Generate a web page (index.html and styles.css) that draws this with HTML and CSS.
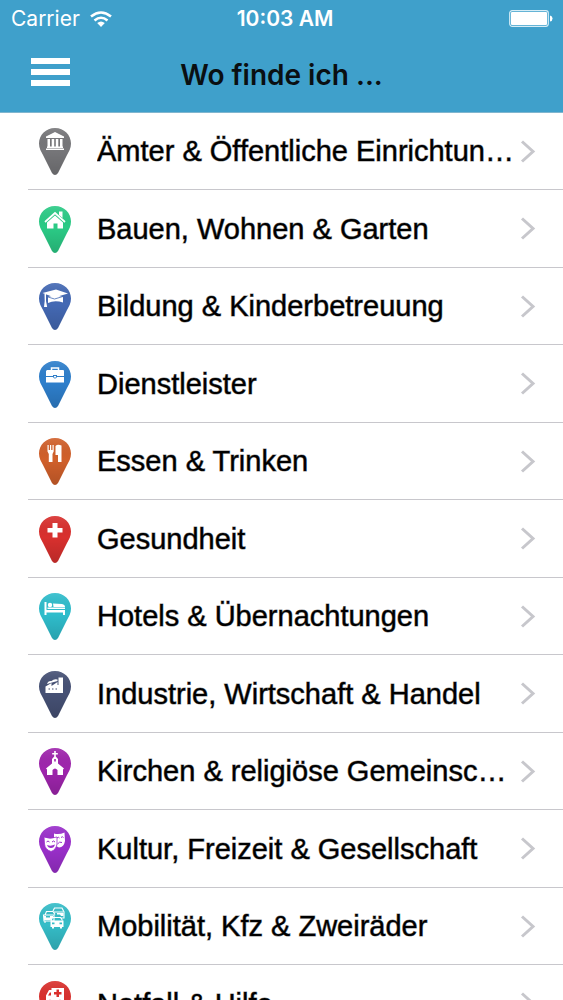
FILE: index.html
```html
<!DOCTYPE html>
<html lang="de">
<head>
<meta charset="utf-8">
<meta name="viewport" content="width=device-width, initial-scale=1">
<title>Wo finde ich ...</title>
<link rel="stylesheet" href="styles.css">
</head>
<body>
<svg class="defs" aria-hidden="true">
  <defs>
    <linearGradient id="shade" x1="0" y1="0" x2="0" y2="1">
      <stop offset="0" stop-color="#fff" stop-opacity=".1"/>
      <stop offset=".45" stop-color="#000" stop-opacity="0"/>
      <stop offset="1" stop-color="#000" stop-opacity=".15"/>
    </linearGradient>
    <path id="drop" d="M16 0C7 0 0 7 0 15.500C0 20 2 23.500 4 27L13 45Q16 49 19 45L28 27C30 23.500 32 20 32 15.500C32 7 25 0 16 0Z"/>
    <g id="pin"><use href="#drop"/><use href="#drop" fill="url(#shade)"/></g>
    <path id="chevron" d="M2 1.500L13 11.500L2 21.500" fill="none" stroke="#c7c7cc" stroke-width="3"/>
  </defs>
</svg>
<header class="header">
  <div class="status">
    <div class="carrier">
      <span>Carrier</span>
      <svg width="22" height="16" viewBox="0 0 22 16" fill="none" stroke="#fff" stroke-width="2.600" aria-hidden="true">
        <path d="M1 5.500Q11-2.500 21 5.500"/><path d="M4.500 9.500Q11 4 17.500 9.500"/><path d="M7.200 12Q11 8.800 14.800 12L11 16Z" fill="#fff" stroke="none"/>
      </svg>
    </div>
    <time class="time">10:03 AM</time>
    <svg class="battery" width="44" height="17" viewBox="0 0 44 17" aria-hidden="true">
      <rect x=".7" y=".7" width="38.600" height="15.600" rx="2.500" fill="none" stroke="#d5edf7" stroke-width="1.200"/>
      <rect x="2" y="2" width="36" height="13" rx="1" fill="#fff"/>
      <path d="M41 5.500Q43.500 6 43.500 8.500T41 11.500Z" fill="#fff"/>
    </svg>
  </div>
  <div class="navbar">
    <button class="menu" type="button" aria-label="Menü"><span></span><span></span><span></span></button>
    <h1 class="title">Wo finde ich ...</h1>
  </div>
</header>
<main>
<ul class="list">
  <li class="row"><a class="link" href="#aemter">
    <svg class="pin" viewBox="0 0 32 48" fill="#77777a"><use href="#pin"/><g fill="#fff"><path d="M16 4L25 8.500V10H7V8.500Z"/><path d="M8.500 11h2.500v8H8.500zM12.700 11h2.500v8h-2.500zM16.800 11h2.500v8h-2.500zM21 11h2.500v8H21zM8 18.500h16V20H8zM7 20.500h18V22H7z"/></g></svg>
    <span class="label">Ämter &amp; Öffentliche Einrichtungen</span>
    <svg class="arrow" viewBox="0 0 16 23"><use href="#chevron"/></svg></a></li>
  <li class="row"><a class="link" href="#bauen">
    <svg class="pin" viewBox="0 0 32 48" fill="#2bcb86"><use href="#pin"/><path fill="none" stroke="#fff" stroke-width="1.700" d="M6 16L16 7L26 16"/><path fill="#fff" d="M20 5.500h3.500V12L20 9zM16 9.500L24 16.500V22.500H18.500v-5h-4v5H8v-6Z"/></svg>
    <span class="label">Bauen, Wohnen &amp; Garten</span>
    <svg class="arrow" viewBox="0 0 16 23"><use href="#chevron"/></svg></a></li>
  <li class="row"><a class="link" href="#bildung">
    <svg class="pin" viewBox="0 0 32 48" fill="#4469b4"><use href="#pin"/><g fill="#fff"><path d="M3.500 10L17 6.500L29 10.500L15.500 14.500Z"/><path d="M9 14Q15.500 11.500 24 14V19.500Q15.500 17 9 20Z"/><path d="M9 14L15.500 16L24 13.500" fill="none" stroke="#4469b4" stroke-width=".8"/><path d="M5.500 11h1.500v7l1.200 6H5l.7-6Z"/></g></svg>
    <span class="label">Bildung &amp; Kinderbetreuung</span>
    <svg class="arrow" viewBox="0 0 16 23"><use href="#chevron"/></svg></a></li>
  <li class="row"><a class="link" href="#dienstleister">
    <svg class="pin" viewBox="0 0 32 48" fill="#2e7fcc"><use href="#pin"/><path fill="none" stroke="#fff" stroke-width="1.500" d="M12.500 10V7h7v3"/><path fill="#fff" d="M8 9h16.500l.5 1v5H18v-1h-4v1H7V10zM7 16h7q2 3 4 0h7v5.500H7z"/><path fill="#fff" d="M15 15h2v1.500h-2z"/></svg>
    <span class="label">Dienstleister</span>
    <svg class="arrow" viewBox="0 0 16 23"><use href="#chevron"/></svg></a></li>
  <li class="row"><a class="link" href="#essen">
    <svg class="pin" viewBox="0 0 32 48" fill="#d1602b"><use href="#pin"/><g fill="#fff"><path d="M8.500 7h1.200v5h1.300V7h1.200v5h1.300V7h1.200v6.500L13.500 16v8H9.800v-8L8.500 13.500Z"/><path d="M16.500 8q2-2 6-.5V24H19v-7H16.500Z"/></g></svg>
    <span class="label">Essen &amp; Trinken</span>
    <svg class="arrow" viewBox="0 0 16 23"><use href="#chevron"/></svg></a></li>
  <li class="row"><a class="link" href="#gesundheit">
    <svg class="pin" viewBox="0 0 32 48" fill="#d9302e"><use href="#pin"/><path fill="#fff" d="M13.500 7h5v5h5v4.500h-5v5h-5v-5h-5V12h5z"/></svg>
    <span class="label">Gesundheit</span>
    <svg class="arrow" viewBox="0 0 16 23"><use href="#chevron"/></svg></a></li>
  <li class="row"><a class="link" href="#hotels">
    <svg class="pin" viewBox="0 0 32 48" fill="#2fbdcc"><use href="#pin"/><path fill="#fff" d="M5.500 9h2v8H26v5h-2v-2.500H7.500V22h-2zM8.500 14.500h17.500V16H8.500zM14 10.500l9 .5q3 .5 3 3H14.500z"/><circle cx="11" cy="12" r="2.200" fill="#fff"/></svg>
    <span class="label">Hotels &amp; Übernachtungen</span>
    <svg class="arrow" viewBox="0 0 16 23"><use href="#chevron"/></svg></a></li>
  <li class="row"><a class="link" href="#industrie">
    <svg class="pin" viewBox="0 0 32 48" fill="#465175"><use href="#pin"/><path fill="#fff" d="M6.500 22v-6.500l6-3.500v3l6-4v3h1V6.500H24V22z"/><path fill="#fff" d="M8 13q1-3.500 4.500-3Q15 7.500 18.500 8.500V10L13 11.500z"/><path fill="#465175" d="M9.500 17.500h1.500v1H9.500zM13 17.500h1.500v1H13zM16.500 17.500H18v1h-1.500z"/></svg>
    <span class="label">Industrie, Wirtschaft &amp; Handel</span>
    <svg class="arrow" viewBox="0 0 16 23"><use href="#chevron"/></svg></a></li>
  <li class="row"><a class="link" href="#kirchen">
    <svg class="pin" viewBox="0 0 32 48" fill="#9f25ad"><use href="#pin"/><path fill="#fff" d="M15.200 3h1.600v2h2v1.500h-2v2L19 11v4.500l6 5-1 1V27h-5.500v-5q-2.500-3-5 0v5H8v-5.500l-1-1 6-5V11l2.200-2.500v-2h-2V5h2z"/><path fill="#9f25ad" d="M15.200 11h1.600v2.500h-1.600z"/></svg>
    <span class="label">Kirchen &amp; religiöse Gemeinschaften</span>
    <svg class="arrow" viewBox="0 0 16 23"><use href="#chevron"/></svg></a></li>
  <li class="row"><a class="link" href="#kultur">
    <svg class="pin" viewBox="0 0 32 48" fill="#9a2fcb"><use href="#pin"/><path fill="#fff" d="M15 7.500Q20 9 25.500 6.500L26 15q-1 6-6 6.500L15 19z"/><path fill="none" stroke="#9a2fcb" d="M18 12q1.500-1.500 2.500 0M22 11.500q1.500-1.500 2.500 0M18.500 18q2-3 4.500-1.500"/><path fill="#fff" stroke="#9a2fcb" stroke-width=".8" d="M5 11q6 2.500 13 0v7q-1 6-6 7.500Q6 23.500 5.500 18Z"/><path fill="none" stroke="#9a2fcb" d="M7.500 16q1.500-2 3 0M13 16q1.500-2 3 0"/><path fill="#9a2fcb" d="M8 19q4 1.500 8-.5-1 3.500-4 3.500T8 19Z"/></svg>
    <span class="label">Kultur, Freizeit &amp; Gesellschaft</span>
    <svg class="arrow" viewBox="0 0 16 23"><use href="#chevron"/></svg></a></li>
  <li class="row"><a class="link" href="#mobilitaet">
    <svg class="pin" viewBox="0 0 32 48" fill="#35bdc8"><use href="#pin"/><g stroke="#fff" fill="none" stroke-width="1.100"><path d="M14 8l1.500-3H23l2 4v6h-3M15 9h9M6 12l1.500-3.500H14l2 3M4.500 12H15v6H5zM6 18v2M12 17.500l1.500-3h8l2 3"/></g><path fill="#fff" fill-rule="evenodd" d="M11.500 17.500h13V24H23v1.500h-2V24h-6v1.500h-2V24h-1.500zM13 19.500v1.800h2.500v-1.800zM20.500 19.500v1.800H23v-1.800z"/><path fill="#fff" d="M5 13h2v1.500h4V13h3v1.500L11.500 17H5zM18 10h6.500v3H22l-1-1.500h-3z"/></svg>
    <span class="label">Mobilität, Kfz &amp; Zweiräder</span>
    <svg class="arrow" viewBox="0 0 16 23"><use href="#chevron"/></svg></a></li>
  <li class="row"><a class="link" href="#notfall">
    <svg class="pin" viewBox="0 0 32 48" fill="#da302d"><use href="#pin"/><path fill="#fff" d="M12.500 7H25v15H7v-7.500l3-5.500h2.500z"/><path fill="#da302d" d="M17.500 8.500h2.500V11h2.500v2.500H20V16h-2.500v-2.500H15V11h2.500zM9 14.500l1.800-3h1.200v3z"/><circle cx="11" cy="21.500" r="2.300" fill="#fff" stroke="#da302d"/><circle cx="21" cy="21.500" r="2.300" fill="#fff" stroke="#da302d"/></svg>
    <span class="label">Notfall &amp; Hilfe</span>
    <svg class="arrow" viewBox="0 0 16 23"><use href="#chevron"/></svg></a></li>
</ul>
</main>
</body>
</html>
```
FILE: styles.css
```css
* { box-sizing: border-box; }
html { scrollbar-width: none; }
body { margin: 0; background: #fff; color: #000; font-family: "Liberation Sans", Arial, sans-serif; }
.defs { position: absolute; width: 0; height: 0; }
.header { background: #3fa0cb; color: #fff; font-family: Inter, sans-serif; border-bottom: 1px solid #80b6cf; }
.status { display: grid; grid-template-columns: 1fr auto 1fr; align-items: center; height: 37px; padding: 0 10px 0 11px; }
.carrier { display: flex; align-items: center; gap: 10px; font-size: 21px; line-height: 24px; }
.time { font-size: 21px; line-height: 24px; font-weight: 600; padding-left: 6px; }
.battery { justify-self: end; }
.navbar { display: grid; grid-template-columns: 40px 1fr 40px; align-items: center; height: 75px; padding: 0 31px; }
.menu { display: flex; flex-direction: column; gap: 5px; padding: 0; border: 0; background: none; margin-bottom: 6px; }
.menu span { height: 6px; width: 39px; background: #fff; }
.title { margin: 0; color: #0a0f12; font-size: 28px; line-height: 34px; font-weight: 600; text-align: center; }
.list { list-style: none; margin: 0; padding: 0 0 0 28px; }
.row { height: 77px; border-bottom: 1px solid #c8c7cc; }
.row:nth-child(even) { height: 78px; }
.link { display: flex; align-items: center; height: 100%; padding: 0 27px 0 11px; color: inherit; text-decoration: none; }
.pin { flex: none; width: 32px; height: 48px; margin: 2px 26px 0 0; }
.label { flex: 1; min-width: 0; margin-right: 2px; overflow: hidden; text-overflow: ellipsis; white-space: nowrap; font-size: 29px; line-height: 36px; -webkit-text-stroke: 1px rgba(0, 0, 0, 0.5); }
.arrow { flex: none; width: 16px; height: 23px; }
```
